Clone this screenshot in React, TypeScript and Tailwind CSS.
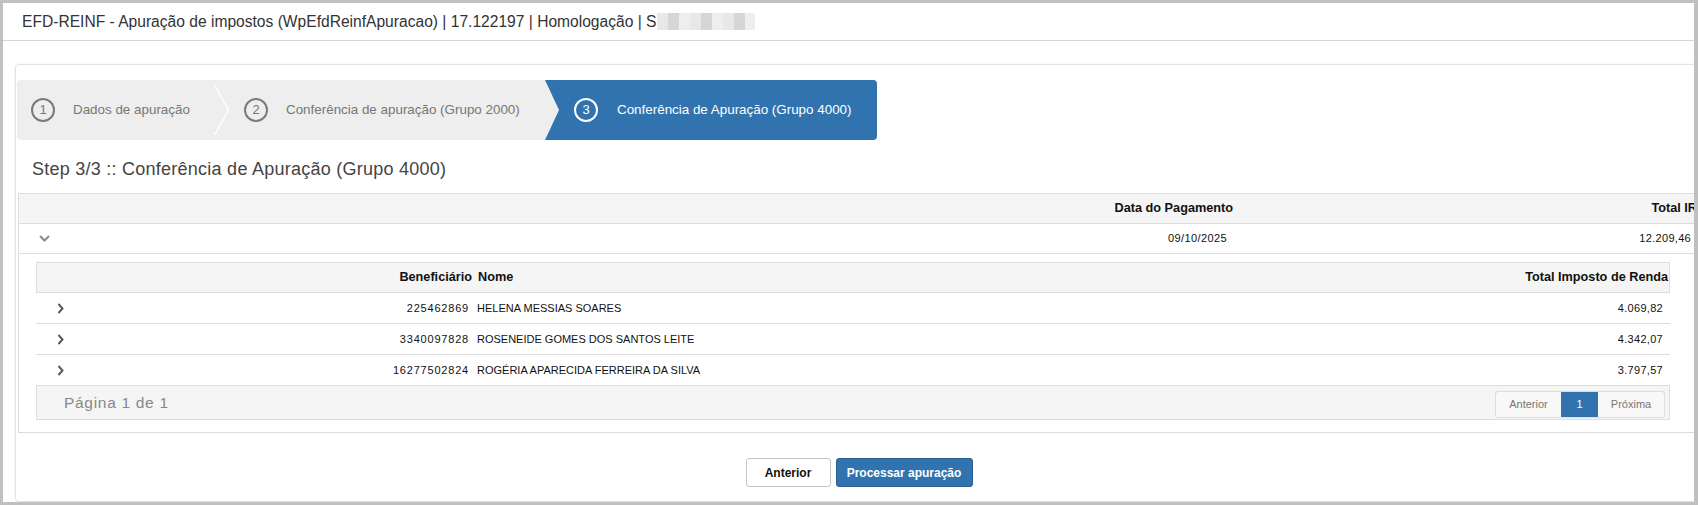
import React from "react";

const font = { fontFamily: '"Liberation Sans", Arial, sans-serif' };

function StepCircle({ n, active }: { n: number; active?: boolean }) {
  return (
    <div
      className={`flex h-[24px] w-[24px] shrink-0 items-center justify-center rounded-full border-2 text-[13px] ${
        active ? "border-white text-white" : "border-[#7a7a7a] text-[#777]"
      }`}
    >
      {n}
    </div>
  );
}

function ChevronDown() {
  return (
    <svg width="11" height="7" viewBox="0 0 11 7">
      <polyline points="1,1 5.5,5.5 10,1" fill="none" stroke="#8a8a8a" strokeWidth="2" />
    </svg>
  );
}

function ChevronRight() {
  return (
    <svg width="7" height="11" viewBox="0 0 7 11">
      <polyline points="1.5,1 5.5,5.5 1.5,10" fill="none" stroke="#5a5a5a" strokeWidth="2" />
    </svg>
  );
}

const rows = [
  { id: "225462869", nome: "HELENA MESSIAS SOARES", total: "4.069,82" },
  { id: "3340097828", nome: "ROSENEIDE GOMES DOS SANTOS LEITE", total: "4.342,07" },
  { id: "16277502824", nome: "ROGÉRIA APARECIDA FERREIRA DA SILVA", total: "3.797,57" },
];

export default function App() {
  return (
    <div
      style={font}
      className="h-[505px] w-[1698px] overflow-hidden border-t-[3px] border-r-[4px] border-b-[3px] border-l-[3px] border-[#c0c0c0] bg-white"
    >
      {/* header */}
      <div className="flex h-[38px] items-center border-b border-[#d6d6d6] pl-[19px] text-[15.6px] text-[#333]">
        EFD-REINF - Apuração de impostos (WpEfdReinfApuracao) | 17.122197 | Homologação | S
        <span className="ml-[1px] h-[17px] w-[98px] bg-[repeating-linear-gradient(90deg,#e8e8e8_0_11px,#d6d6d6_11px_22px,#eeeeee_22px_33px)]" />
      </div>

      {/* card */}
      <div className="ml-[12px] mr-[-10px] mt-[23px] rounded-[4px] border border-[#e2e2e2] pb-[14px] pl-[1px] pr-[2px] pt-[15px] shadow-[0_0_3px_rgba(0,0,0,0.06)]">
        {/* wizard */}
        <div className="flex h-[60px] w-[860px] overflow-hidden rounded-[4px] bg-[#eeeeee] text-[13.4px] text-[#777]">
          <div className="flex w-[197px] items-center pl-[14px]">
            <StepCircle n={1} />
            <span className="ml-[18px]">Dados de apuração</span>
          </div>
          <svg width="16" height="60" viewBox="0 0 16 60" className="shrink-0">
            <polyline points="0.5,5 14.5,30 0.5,55" fill="none" stroke="#ffffff" strokeWidth="1.5" />
          </svg>
          <div className="flex w-[315px] items-center pl-[14px]">
            <StepCircle n={2} />
            <span className="ml-[18px]">Conferência de apuração (Grupo 2000)</span>
          </div>
          <div className="flex w-[332px] items-center bg-[#3173ae] text-white">
            <svg width="14" height="60" viewBox="0 0 14 60" className="shrink-0">
              <polygon points="0,0 14,30 0,60" fill="#eeeeee" />
            </svg>
            <div className="ml-[15px] flex items-center">
              <StepCircle n={3} active />
              <span className="ml-[19px]">Conferência de Apuração (Grupo 4000)</span>
            </div>
          </div>
        </div>

        {/* heading */}
        <div className="flex h-[53px] items-center pl-[15px] pt-[6px] text-[18px] tracking-[0.25px] text-[#444]">
          Step 3/3 :: Conferência de Apuração (Grupo 4000)
        </div>

        {/* outer table */}
        <div className="ml-[1px] border border-[#dddddd] text-[11px] text-[#111]">
          <div className="grid h-[30px] grid-cols-[357px_859px_1fr] border-b border-[#dddddd] bg-[#f5f5f5] text-[12.7px] font-bold">
            <div />
            <div className="flex items-center justify-end pr-[2px]">Data do Pagamento</div>
            <div className="flex items-center justify-end pr-[3px]">Total IR</div>
          </div>
          <div className="grid h-[30px] grid-cols-[357px_859px_1fr] border-b border-[#dddddd]">
            <div className="flex items-center pl-[20px]">
              <ChevronDown />
            </div>
            <div className="flex items-center justify-end pr-[8px] tracking-[0.4px]">09/10/2025</div>
            <div className="flex items-center justify-end pr-[9px] tracking-[0.3px]">12.209,46</div>
          </div>

          {/* nested */}
          <div className="pb-[12px] pl-[17px] pr-[30px] pt-[8px]">
            <div className="grid h-[31px] grid-cols-[162px_275px_726px_1fr] border border-[#dddddd] bg-[#f5f5f5] text-[12.7px] font-bold">
              <div />
              <div className="flex items-center justify-end pr-[2px]">Beneficiário</div>
              <div className="flex items-center pl-[4px]">Nome</div>
              <div className="flex items-center justify-end pr-[1px]">Total Imposto de Renda</div>
            </div>
            {rows.map((r) => (
              <div
                key={r.id}
                className="grid h-[31px] grid-cols-[162px_275px_726px_1fr] border-b border-[#dddddd]"
              >
                <div className="flex items-center pl-[21px]">
                  <ChevronRight />
                </div>
                <div className="flex items-center justify-end pr-[4px] tracking-[0.8px]">{r.id}</div>
                <div className="flex items-center pl-[4px]">{r.nome}</div>
                <div className="flex items-center justify-end pr-[7px] tracking-[0.3px]">{r.total}</div>
              </div>
            ))}
            <div className="flex h-[34px] items-start justify-between border border-t-0 border-[#dddddd] bg-[#f5f5f5] pr-[4px]">
              <span className="self-center pl-[27px] text-[15.5px] tracking-[0.7px] text-[#888]">Página 1 de 1</span>
              <div className="mt-[5px] flex h-[27px] overflow-hidden rounded-[3px] border border-[#dddddd] bg-[#f8f8f8] text-[11px] text-[#777]">
                <div className="flex w-[65px] items-center justify-center">Anterior</div>
                <div className="flex w-[37px] items-center justify-center bg-[#3173ae] text-white">1</div>
                <div className="flex w-[66px] items-center justify-center">Próxima</div>
              </div>
            </div>
          </div>
        </div>

        {/* buttons */}
        <div className="mt-[25px] flex justify-center gap-[5px] text-[12px] font-bold">
          <button className="h-[29px] w-[85px] rounded-[3px] border border-[#c4c4c4] bg-white text-[#111]">
            Anterior
          </button>
          <button className="h-[29px] w-[137px] rounded-[3px] border border-[#2a5d8c] bg-[#3173ae] text-white">
            Processar apuração
          </button>
        </div>
      </div>
    </div>
  );
}
